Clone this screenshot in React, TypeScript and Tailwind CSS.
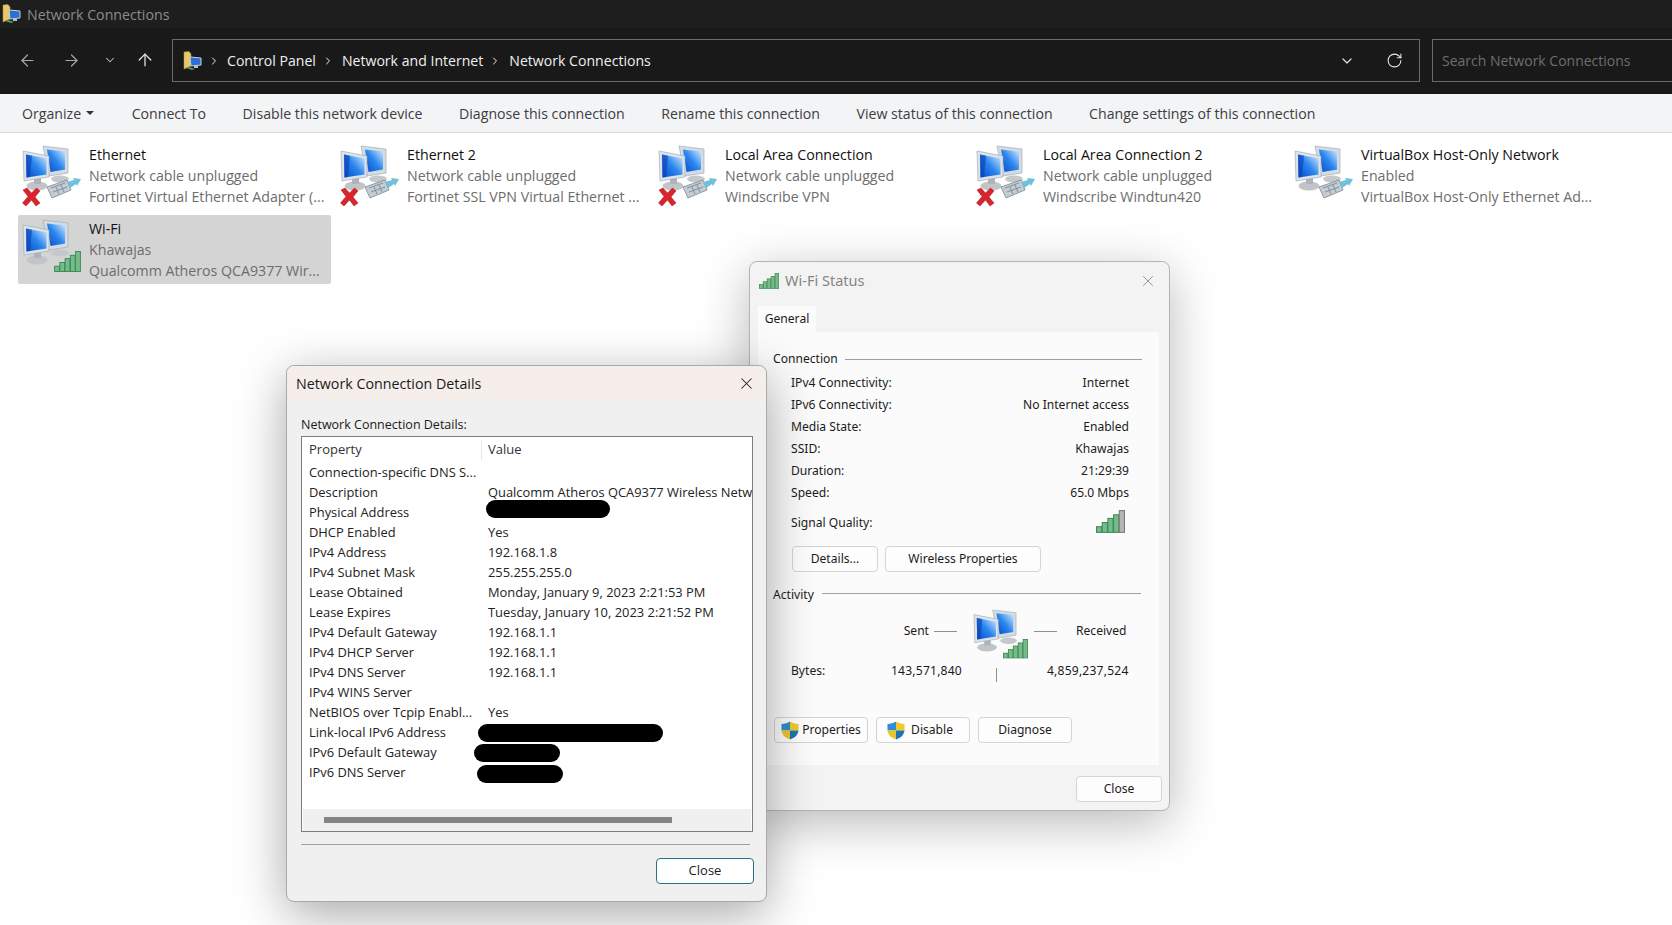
import { ArrowLeft, ArrowRight, ArrowUp, ChevronDown, ChevronRight, RotateCw, X } from "lucide-react";

type Badge = "unplugged" | "plug" | "signal";

const connections: { name: string; status: string; device: string; badge: Badge }[] = [
  { name: "Ethernet", status: "Network cable unplugged", device: "Fortinet Virtual Ethernet Adapter (...", badge: "unplugged" },
  { name: "Ethernet 2", status: "Network cable unplugged", device: "Fortinet SSL VPN Virtual Ethernet ...", badge: "unplugged" },
  { name: "Local Area Connection", status: "Network cable unplugged", device: "Windscribe VPN", badge: "unplugged" },
  { name: "Local Area Connection 2", status: "Network cable unplugged", device: "Windscribe Windtun420", badge: "unplugged" },
  { name: "VirtualBox Host-Only Network", status: "Enabled", device: "VirtualBox Host-Only Ethernet Ad...", badge: "plug" },
  { name: "Wi-Fi", status: "Khawajas", device: "Qualcomm Atheros QCA9377 Wir...", badge: "signal" },
];

const commands = [
  "Connect To",
  "Disable this network device",
  "Diagnose this connection",
  "Rename this connection",
  "View status of this connection",
  "Change settings of this connection",
];

const details = [
  ["Connection-specific DNS S...", ""],
  ["Description", "Qualcomm Atheros QCA9377 Wireless Netw"],
  ["Physical Address", ""],
  ["DHCP Enabled", "Yes"],
  ["IPv4 Address", "192.168.1.8"],
  ["IPv4 Subnet Mask", "255.255.255.0"],
  ["Lease Obtained", "Monday, January 9, 2023 2:21:53 PM"],
  ["Lease Expires", "Tuesday, January 10, 2023 2:21:52 PM"],
  ["IPv4 Default Gateway", "192.168.1.1"],
  ["IPv4 DHCP Server", "192.168.1.1"],
  ["IPv4 DNS Server", "192.168.1.1"],
  ["IPv4 WINS Server", ""],
  ["NetBIOS over Tcpip Enabl...", "Yes"],
  ["Link-local IPv6 Address", ""],
  ["IPv6 Default Gateway", ""],
  ["IPv6 DNS Server", ""],
];

const statusRows = [
  ["IPv4 Connectivity:", "Internet"],
  ["IPv6 Connectivity:", "No Internet access"],
  ["Media State:", "Enabled"],
  ["SSID:", "Khawajas"],
  ["Duration:", "21:29:39"],
  ["Speed:", "65.0 Mbps"],
];

function Bars({ lastGray }: { lastGray?: boolean }) {
  return (
    <>
      <rect x="0.5" y="16" width="5" height="5.5" fill="#78bb8b" stroke="#3a8a55" />
      <rect x="6" y="12" width="5" height="9.5" fill="#78bb8b" stroke="#3a8a55" />
      <rect x="11.5" y="8" width="5" height="13.5" fill="#78bb8b" stroke="#3a8a55" />
      <rect x="17" y="4.5" width="5" height="17" fill="#78bb8b" stroke="#3a8a55" />
      <rect x="22.5" y="0.5" width="5" height="21" fill={lastGray ? "#b5b5b5" : "#78bb8b"} stroke={lastGray ? "#777" : "#3a8a55"} />
    </>
  );
}

function SignalBars({ className, lastGray }: { className?: string; lastGray?: boolean }) {
  return (
    <svg viewBox="0 0 28 22" className={className}>
      <Bars lastGray={lastGray} />
    </svg>
  );
}

function Monitors({ id }: { id: string }) {
  return (
    <>
      <defs>
        <linearGradient id={id} x1="0" y1="1" x2="1" y2="0">
          <stop offset="0" stopColor="#0b49c8" />
          <stop offset="0.5" stopColor="#2a86ee" />
          <stop offset="1" stopColor="#d5ebfd" />
        </linearGradient>
      </defs>
      {/* back monitor */}
      <ellipse cx="38" cy="34" rx="9" ry="3.5" fill="#c6c9cc" />
      <path d="M21 1 L46 4 L46 28 L27 31 Z" fill="#d3dbe3" stroke="#9aa5b0" strokeWidth="0.6" />
      <path d="M25 4.5 L43 6.5 L43 24.5 L28.5 27 Z" fill={`url(#${id})`} />
      {/* front monitor */}
      <ellipse cx="15" cy="41" rx="10.5" ry="4.5" fill="#c2c5c8" />
      <rect x="12" y="33" width="7" height="6" fill="#b0b4b8" />
      <path d="M1 6 L27 11 L27 32 L2 36 Z" fill="#dde3e9" stroke="#9aa5b0" strokeWidth="0.6" />
      <path d="M4 9.5 L24.5 13.5 L24.5 29.5 L4.5 32.5 Z" fill={`url(#${id})`} />
      <path d="M4 9.5 L10 10.7 L8 32 L4.5 32.5 Z" fill="#0a3fb5" opacity="0.6" />
    </>
  );
}

function NetworkIcon({ badge, id, className = "w-[62px] h-[62px]" }: { badge: Badge; id: string; className?: string }) {
  return (
    <svg viewBox="0 0 62 62" className={`shrink-0 ${className}`}>
      <Monitors id={id} />
      {badge === "unplugged" && (
        <path d="M1 45 L5 43 L9.5 48 L14.5 43 L18 46 L13 52 L18 58 L14 61 L9.5 55 L4 61 L0.5 58 L6 51.5 Z" fill="#d8242c" stroke="#a81a20" strokeWidth="0.5" />
      )}
      {badge !== "signal" && (
        <g transform="translate(-1 -2)">
          <path d="M26 44 L46 37 L50 47 L31 55 Z" fill="#c3ccd3" stroke="#7c8893" strokeWidth="0.8" />
          <path d="M30 45 L44 40 M32 49 L46 44 M35 44 L38 51 M40 42 L43 49" stroke="#7c8893" strokeWidth="0.9" />
          <path d="M46 39 L53 37 L52 35 L60 36 L56 43 L55 41 L49 45 Z" fill="#6fc0da" />
        </g>
      )}
      {badge === "signal" && (
        <svg x="32" y="32" width="27" height="21" viewBox="0 0 28 22">
          <Bars />
        </svg>
      )}
    </svg>
  );
}

function FolderIcon({ className }: { className?: string }) {
  return (
    <svg viewBox="0 0 20 20" className={className}>
      <path d="M1 1 L6 0.5 L8 3 L8 15 L1 18 Z" fill="#e8c66a" stroke="#b8953c" strokeWidth="0.5" />
      <path d="M7 6 L18 7 L18 14 L8 15 Z" fill="#2b6fd6" stroke="#c9d2db" strokeWidth="1" />
      <rect x="11" y="15" width="4" height="2" fill="#b9c0c7" />
      <path d="M3 17 L9 19 L12 18 L6 16 Z" fill="#4aa35e" />
    </svg>
  );
}

function Shield() {
  return (
    <svg viewBox="0 0 18 19" className="w-[18px] h-[19px] shrink-0">
      <path d="M9 0.5 L9 9.5 L0.5 9.5 L0.5 3 C4 3 6.5 2 9 0.5 Z" fill="#2e8ecf" />
      <path d="M9 0.5 C11.5 2 14 3 17.5 3 L17.5 9.5 L9 9.5 Z" fill="#f0c92c" />
      <path d="M0.5 9.5 L9 9.5 L9 18.5 C4.5 17 1 14 0.5 9.5 Z" fill="#ecc52a" />
      <path d="M9 9.5 L17.5 9.5 C17 14 13.5 17 9 18.5 Z" fill="#1f74ad" />
    </svg>
  );
}

function WinButton({ children, className }: { children: React.ReactNode; className: string }) {
  return (
    <button type="button" className={`h-[26px] flex items-center justify-center rounded-[4px] border border-[#d4d4d4] bg-[#fdfdfd] text-[12.1px] text-[#1b1b1b] ${className}`}>
      {children}
    </button>
  );
}

function DetailsDialog() {
  return (
    <div className="absolute left-[286px] top-[365px] w-[481px] h-[537px] rounded-[8px] border border-[#a9a9a9] bg-[#f0f0f0] shadow-[0_12px_50px_rgba(0,0,0,0.35)] flex flex-col font-['Open_Sans',sans-serif] z-20">
      <div className="h-[35px] shrink-0 rounded-t-[8px] bg-[#f5eeeb] pl-[9px] pr-[10px] flex items-center justify-between">
        <span className="text-[14.25px] text-[#1a1a1a]">Network Connection Details</span>
        <X size={19} strokeWidth={1.3} className="text-[#222]" />
      </div>
      <div className="flex-1 pl-[14px] pr-[13px] pt-[15px] flex flex-col">
        <p className="text-[12.5px] leading-[18px] text-[#1a1a1a]">Network Connection Details:</p>
        <div className="mt-[2px] h-[396px] w-[452px] border border-[#7d7d7d] bg-white flex flex-col relative">
          <div className="h-[26px] shrink-0 grid grid-cols-[180px_1fr] text-[13px] text-[#333] items-center">
            <span className="pl-[7px] border-r border-[#e6e6e6]">Property</span>
            <span className="pl-[6px]">Value</span>
          </div>
          <div className="flex-1 overflow-hidden">
            {details.map(([property, value]) => (
              <div key={property} className="h-[20px] grid grid-cols-[179px_1fr] items-center text-[12.9px] text-[#222] whitespace-nowrap">
                <span className="pl-[7px] overflow-hidden">{property}</span>
                <span className="pl-[7px] overflow-hidden">{value}</span>
              </div>
            ))}
          </div>
          <div className="h-[22px] shrink-0 bg-[#f0f0f0] mx-[1px] flex items-center pl-[21px]">
            <div className="h-[6px] w-[348px] bg-[#858585]" />
          </div>
          {/* blacked out values */}
          <div className="absolute left-[184px] top-[63px] w-[124px] h-[18px] rounded-full bg-black" />
          <div className="absolute left-[176px] top-[287px] w-[185px] h-[18px] rounded-full bg-black" />
          <div className="absolute left-[172px] top-[307px] w-[86px] h-[18px] rounded-full bg-black" />
          <div className="absolute left-[175px] top-[328px] w-[86px] h-[18px] rounded-full bg-black" />
        </div>
        <div className="mt-[12px] w-[449px] h-px bg-[#a0a0a0]" />
        <div className="mt-[13px] flex justify-end w-[453px]">
          <button type="button" className="w-[98px] h-[26px] rounded-[4px] border border-[#2b6f8f] bg-white text-[13px] text-[#1b1b1b]">
            Close
          </button>
        </div>
      </div>
    </div>
  );
}

function StatusDialog() {
  return (
    <div className="absolute left-[749px] top-[261px] w-[421px] h-[550px] rounded-[8px] border border-[#b4b4b4] bg-[#f3f3f3] shadow-[0_12px_50px_rgba(0,0,0,0.28)] flex flex-col font-['Noto_Sans',sans-serif] text-[12.1px] text-[#1b1b1b] z-10">
      <div className="h-[38px] shrink-0 pl-[9px] pr-[12px] flex items-center justify-between">
        <div className="flex items-center gap-[6px]">
          <SignalBars className="w-[20px] h-[16px]" />
          <span className="text-[14.5px] text-[#858585]">Wi-Fi Status</span>
        </div>
        <X size={18} strokeWidth={1} className="text-[#777]" />
      </div>
      <div className="ml-[8px] mt-[6px] w-[58px] h-[26px] shrink-0 bg-[#fbfbfb] flex items-center justify-center">General</div>
      <div className="ml-[8px] w-[401px] h-[433px] shrink-0 bg-[#fbfbfb] pl-[15px] pt-[17px]">
        <div className="flex items-center h-[20px]">
          <span>Connection</span>
          <div className="ml-[7px] w-[297px] h-px bg-[#a0a0a0]" />
        </div>
        <div className="pl-[18px] w-[356px] mt-[3px]">
          {statusRows.map(([label, value]) => (
            <div key={label} className="h-[22px] flex items-center justify-between">
              <span>{label}</span>
              <span>{value}</span>
            </div>
          ))}
          <div className="h-[38px] flex items-center justify-between">
            <span>Signal Quality:</span>
            <SignalBars lastGray className="w-[29px] h-[25px] mr-[4px] -mt-[4px]" />
          </div>
        </div>
        <div className="ml-[19px] mt-[4px] flex gap-[7px]">
          <WinButton className="w-[86px]">Details...</WinButton>
          <WinButton className="w-[156px]">Wireless Properties</WinButton>
        </div>
        <div className="mt-[13px] flex items-center h-[20px]">
          <span>Activity</span>
          <div className="ml-[8px] w-[319px] h-px bg-[#a0a0a0] -mt-[4px]" />
        </div>
        <div className="relative h-[103px] w-[380px]">
          <div className="flex items-start">
            <span className="w-[156px] mt-[17px] text-right">Sent</span>
            <div className="ml-[5px] mt-[26px] w-[23px] h-px bg-[#8f8f8f]" />
            <NetworkIcon badge="signal" id="activity-screen" className="ml-[16px] mt-[4px] w-[58px] h-[58px]" />
            <div className="ml-[3px] mt-[26px] w-[23px] h-px bg-[#8f8f8f]" />
            <span className="ml-[19px] mt-[17px]">Received</span>
          </div>
          <span className="absolute left-[18px] top-[57px]">Bytes:</span>
          <span className="absolute left-[118px] top-[57px] tracking-[0.2px]">143,571,840</span>
          <div className="absolute left-[223px] top-[63px] w-px h-[14px] bg-[#8f8f8f]" />
          <span className="absolute left-[274px] top-[57px] tracking-[0.2px]">4,859,237,524</span>
        </div>
        <div className="mt-[9px] ml-[1px] flex gap-[8px]">
          <WinButton className="w-[94px] gap-[3px]"><Shield />Properties</WinButton>
          <WinButton className="w-[94px] gap-[6px] pr-[6px]"><Shield />Disable</WinButton>
          <WinButton className="w-[94px]">Diagnose</WinButton>
        </div>
      </div>
      <div className="flex justify-end pr-[7px] pt-[11px]">
        <WinButton className="w-[86px]">Close</WinButton>
      </div>
    </div>
  );
}

export default function App() {
  return (
    <div className="relative w-[1672px] h-[925px] overflow-hidden bg-white font-['Open_Sans',sans-serif]">
      <div className="h-[28px] bg-[#1e1e1e] flex items-center pl-[2px] gap-[5px]">
        <FolderIcon className="w-[20px] h-[20px]" />
        <span className="text-[14.2px] pt-[2px] text-[#8c8c8c]">Network Connections</span>
      </div>
      <div className="h-[66px] bg-[#191919] flex items-center pl-[18px] pb-[2px]">
        <ArrowLeft size={19} strokeWidth={1.5} className="text-[#a6a6a6]" />
        <ArrowRight size={19} strokeWidth={1.5} className="ml-[25px] text-[#a6a6a6]" />
        <ChevronDown size={14} strokeWidth={1.8} className="ml-[22px] text-[#c0c0c0]" />
        <ArrowUp size={20} strokeWidth={1.5} className="ml-[18px] text-[#e8e8e8]" />
        <div className="ml-[17px] w-[1248px] h-[43px] border border-[#6a6a6a] flex items-center pl-[10px] pt-[1px] text-[14.1px] text-[#f0f0f0]">
          <FolderIcon className="w-[20px] h-[20px]" />
          <ChevronRight size={12} className="ml-[5px]" />
          <span className="ml-[7px]">Control Panel</span>
          <ChevronRight size={12} className="ml-[6px]" />
          <span className="ml-[8px]">Network and Internet</span>
          <ChevronRight size={12} className="ml-[6px]" />
          <span className="ml-[8px]">Network Connections</span>
          <ChevronDown size={16} strokeWidth={1.8} className="ml-auto mr-[31px] text-[#e0e0e0]" />
          <RotateCw size={17} strokeWidth={1.5} className="mr-[16px] text-[#e8e8e8]" />
        </div>
        <div className="ml-[12px] flex-1 h-[43px] border border-[#6a6a6a] border-r-0 flex items-center pl-[9px] text-[14px] text-[#6e6e6e]">
          Search Network Connections
        </div>
      </div>
      <div className="h-[39px] bg-[#f3f4f6] border-b border-[#dcdcdc] flex items-center pl-[22px] pt-[1px] gap-[36.5px] text-[14.15px] text-[#3d3d3d]">
        <span className="flex items-center gap-[5px] mr-[1px]">
          Organize
          <span className="w-0 h-0 border-x-[4px] border-x-transparent border-t-[4px] border-t-[#333]" />
        </span>
        {commands.map((command) => (
          <span key={command}>{command}</span>
        ))}
      </div>
      <div className="pt-[8px] pl-[18px] grid grid-cols-[repeat(5,318px)] gap-y-[5px]">
        {connections.map((item) => (
          <div key={item.name} className={`h-[69px] w-[313px] flex items-center pl-[4px] rounded-[2px] ${item.badge === "signal" ? "bg-[#d4d4d4]" : ""}`}>
            <NetworkIcon badge={item.badge} id={`screen-${item.name.replace(/\W/g, "")}`} />
            <div className="ml-[5px] flex flex-col text-[14.2px] leading-[21px] whitespace-nowrap">
              <span className="text-[#111]">{item.name}</span>
              <span className="text-[#6d6d6d]">{item.status}</span>
              <span className="text-[#6d6d6d]">{item.device}</span>
            </div>
          </div>
        ))}
      </div>
      <StatusDialog />
      <DetailsDialog />
    </div>
  );
}
